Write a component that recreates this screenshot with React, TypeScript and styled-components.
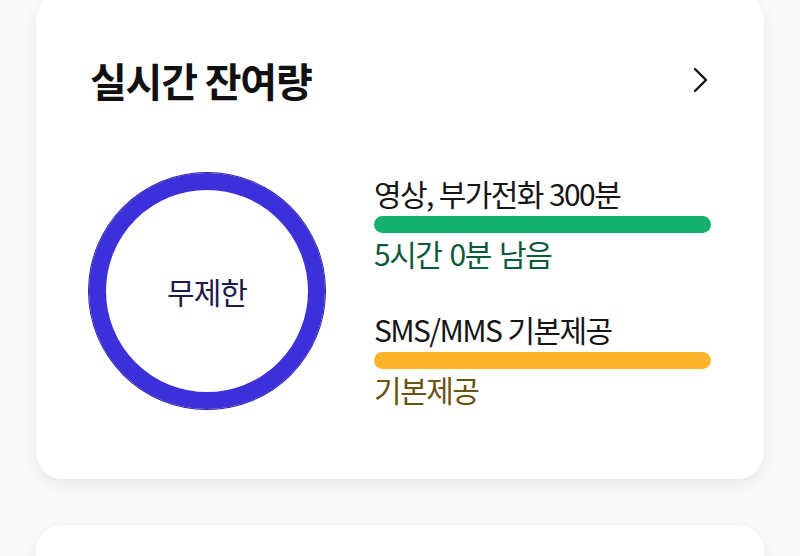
import React from "react";
import styled, { createGlobalStyle } from "styled-components";

const Global = createGlobalStyle`
  html, body { margin: 0; padding: 0; background: #fafafa; }
  body { font-family: "Noto Sans CJK KR", "Noto Sans", sans-serif; overflow: hidden; }
`;

const Page = styled.div`
  height: 556px;
  padding: 0 36px;
  display: flex;
  flex-direction: column;
  gap: 46px;
  overflow: hidden;
`;

const Card = styled.section<{ $top?: number }>`
  background: #fff;
  border-radius: 26px;
  box-shadow: 0 6px 22px rgba(0, 0, 0, 0.07), 0 1px 3px rgba(0, 0, 0, 0.03);
  margin-top: ${(p) => p.$top ?? 0}px;
  padding: 64px 53px 70px 53px;
  flex-shrink: 0;
`;

const EmptyCard = styled.section`
  background: #fff;
  border-radius: 26px;
  box-shadow: 0 6px 22px rgba(0, 0, 0, 0.07), 0 1px 3px rgba(0, 0, 0, 0.03);
  height: 200px;
  flex-shrink: 0;
`;

const Header = styled.div`
  display: flex;
  align-items: center;
  justify-content: space-between;
  padding-left: 1px;
  height: 44px;
`;

const Title = styled.h2`
  margin: 0;
  font-size: 40px;
  line-height: 44px;
  font-weight: 700;
  color: #111;
  letter-spacing: -1.2px;
`;

const Body = styled.div`
  display: flex;
  align-items: center;
  gap: 49px;
  margin-top: 71px;
`;

const Ring = styled.div`
  width: 236px;
  height: 236px;
  box-sizing: border-box;
  border-radius: 50%;
  border: 17px solid #3b30d9;
  box-shadow: 0 0 0 1px #2b2196;
  display: flex;
  align-items: center;
  justify-content: center;
  flex-shrink: 0;
`;

const RingLabel = styled.span`
  font-size: 30px;
  line-height: 36px;
  color: #1c1a48;
  letter-spacing: -1px;
`;

const Items = styled.div`
  flex: 1;
  display: flex;
  flex-direction: column;
  gap: 44px;
`;

const Item = styled.div`
  display: flex;
  flex-direction: column;
`;

const Label = styled.div`
  font-size: 30px;
  line-height: 32px;
  color: #161616;
  letter-spacing: -1.6px;
  word-spacing: 1px;
`;

const Bar = styled.div<{ $color: string }>`
  height: 17px;
  border-radius: 9px;
  background: ${(p) => p.$color};
  margin: 7px 0 4px;
`;

const Sub = styled.div<{ $color: string }>`
  font-size: 30px;
  line-height: 32px;
  color: ${(p) => p.$color};
  letter-spacing: -1.5px;
  word-spacing: 3px;
`;

const Chevron = () => (
  <svg width="20" height="28" viewBox="0 0 20 28" fill="none">
    <path d="M4 3 L15 14 L4 25" stroke="#111" strokeWidth="2.4" strokeLinecap="round" strokeLinejoin="round" />
  </svg>
);

const items = [
  { label: "영상, 부가전화 300분", bar: "#13b06e", sub: "5시간 0분 남음", subColor: "#0d5a3b" },
  { label: "SMS/MMS 기본제공", bar: "#fcb42b", sub: "기본제공", subColor: "#6b5313" },
];

export default function App() {
  return (
    <>
      <Global />
      <Page>
        <Card $top={-6}>
          <Header>
            <Title>실시간 잔여량</Title>
            <Chevron />
          </Header>
          <Body>
            <Ring>
              <RingLabel>무제한</RingLabel>
            </Ring>
            <Items>
              {items.map((it) => (
                <Item key={it.label}>
                  <Label>{it.label}</Label>
                  <Bar $color={it.bar} />
                  <Sub $color={it.subColor}>{it.sub}</Sub>
                </Item>
              ))}
            </Items>
          </Body>
        </Card>
        <EmptyCard />
      </Page>
    </>
  );
}
